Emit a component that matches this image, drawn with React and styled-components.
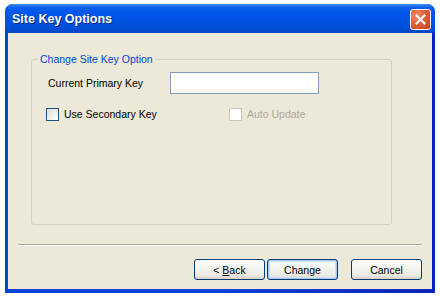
import React from 'react';
import styled, { createGlobalStyle } from 'styled-components';

const GlobalStyle = createGlobalStyle`
  html, body {
    margin: 0;
    padding: 0;
    background: #fff;
  }
  body {
    font-family: 'Liberation Sans', Arial, sans-serif;
    font-size: 10.5px;
    color: #000;
  }
`;

const Page = styled.div`
  width: 440px;
  height: 298px;
  padding: 4px 5px 0;
  box-sizing: border-box;
`;

const Window = styled.div`
  width: 430px;
  height: 289px;
  display: flex;
  flex-direction: column;
  border-radius: 8px 8px 0 0;
  overflow: hidden;
  background: #0831d9;
`;

const TitleBar = styled.div`
  height: 29px;
  flex: none;
  display: flex;
  align-items: center;
  justify-content: space-between;
  padding: 0 4px 0 7px;
  box-sizing: border-box;
  background: linear-gradient(
    to bottom,
    #3d8ff7 0%,
    #0a60ec 12%,
    #0055ea 30%,
    #0052e0 60%,
    #004ed6 85%,
    #0a44c2 100%
  );
`;

const Title = styled.span`
  color: #fff;
  font-weight: bold;
  font-size: 12.5px;
  padding-top: 1px;
  text-shadow: 1px 1px 0 #0b2a8a;
`;

const CloseButton = styled.button`
  width: 21px;
  height: 21px;
  padding: 0;
  margin-top: 1px;
  border: 1px solid #fff;
  border-radius: 3px;
  display: flex;
  align-items: center;
  justify-content: center;
  background: radial-gradient(circle at 30% 30%, #ee8a6e 0%, #e0603d 45%, #c6401b 100%);
`;

const Frame = styled.div`
  flex: 1;
  display: flex;
  padding: 0 3px 4px;
  background: linear-gradient(to right, #0842d8 0%, #0842d8 50%, #0026b8 100%);
`;

const Client = styled.div`
  flex: 1;
  display: flex;
  flex-direction: column;
  padding: 0 10px 9px;
  background: #ece9d8;
`;

const GroupBox = styled.div`
  position: relative;
  margin: 26px 0 0 13px;
  width: 361px;
  height: 166px;
  box-sizing: border-box;
  border: 1px solid #d0d0bf;
  border-radius: 3px;
  padding: 12px 0 0 14px;
`;

const Legend = styled.span`
  position: absolute;
  top: -7px;
  left: 6px;
  padding: 0 2px;
  background: #ece9d8;
  color: #0046d5;
  line-height: 13px;
`;

const Row = styled.div`
  display: flex;
  align-items: center;
  height: ${(p) => p.height}px;
  margin-top: ${(p) => p.gap || 0}px;
`;

const Label = styled.span`
  width: 124px;
  padding-left: 2px;
  box-sizing: border-box;
  flex: none;
`;

const TextBox = styled.input`
  width: 149px;
  height: 22px;
  box-sizing: border-box;
  border: 1px solid #7f9db9;
  background: #fff;
  outline: none;
`;

const CheckItem = styled.label`
  display: flex;
  align-items: center;
  gap: 5px;
  width: ${(p) => p.width || 'auto'};
  color: ${(p) => (p.disabled ? '#aca899' : '#000')};
`;

const Box = styled.span`
  width: 13px;
  height: 13px;
  box-sizing: border-box;
  border: 1px solid ${(p) => (p.disabled ? '#cac8bb' : '#1c5180')};
  background: ${(p) => (p.disabled ? '#fff' : 'linear-gradient(135deg, #dcdcd7 0%, #f5f5f2 70%, #fff 100%)')};
`;

const Separator = styled.div`
  margin-top: 19px;
  height: 0;
  border-top: 1px solid #aca899;
  border-bottom: 1px solid #fff;
`;

const ButtonRow = styled.div`
  display: flex;
  justify-content: flex-end;
  margin-top: 13px;
`;

const Button = styled.button`
  width: 71px;
  height: 21px;
  margin-left: ${(p) => p.gap || 0}px;
  padding: 0;
  font-family: inherit;
  font-size: 10.5px;
  color: #000;
  border: 1px solid #003c74;
  border-radius: 3px;
  background: linear-gradient(to bottom, #fff 0%, #f4f4f0 40%, #ecebe6 80%, #d6d0c5 100%);
  box-shadow: ${(p) => (p.primary ? 'inset 0 0 0 1px #a9c6f5, inset 0 0 0 2px #cee0fb' : 'none')};
`;

const Underline = styled.span`
  text-decoration: underline;
`;

export default function App() {
  return (
    <Page>
      <GlobalStyle />
      <Window>
        <TitleBar>
          <Title>Site Key Options</Title>
          <CloseButton aria-label="Close">
            <svg width="11" height="11" viewBox="0 0 11 11">
              <path d="M1.5 1.5 L9.5 9.5 M9.5 1.5 L1.5 9.5" stroke="#fff" strokeWidth="2" strokeLinecap="square" />
            </svg>
          </CloseButton>
        </TitleBar>
        <Frame>
          <Client>
            <GroupBox>
              <Legend>Change Site Key Option</Legend>
              <Row height={22}>
                <Label>Current Primary Key</Label>
                <TextBox />
              </Row>
              <Row height={16} gap={12}>
                <CheckItem width="183px">
                  <Box />
                  Use Secondary Key
                </CheckItem>
                <CheckItem disabled>
                  <Box disabled />
                  Auto Update
                </CheckItem>
              </Row>
            </GroupBox>
            <Separator />
            <ButtonRow>
              <Button>
                &lt; <Underline>B</Underline>ack
              </Button>
              <Button primary gap={2}>Change</Button>
              <Button gap={13}>Cancel</Button>
            </ButtonRow>
          </Client>
        </Frame>
      </Window>
    </Page>
  );
}
